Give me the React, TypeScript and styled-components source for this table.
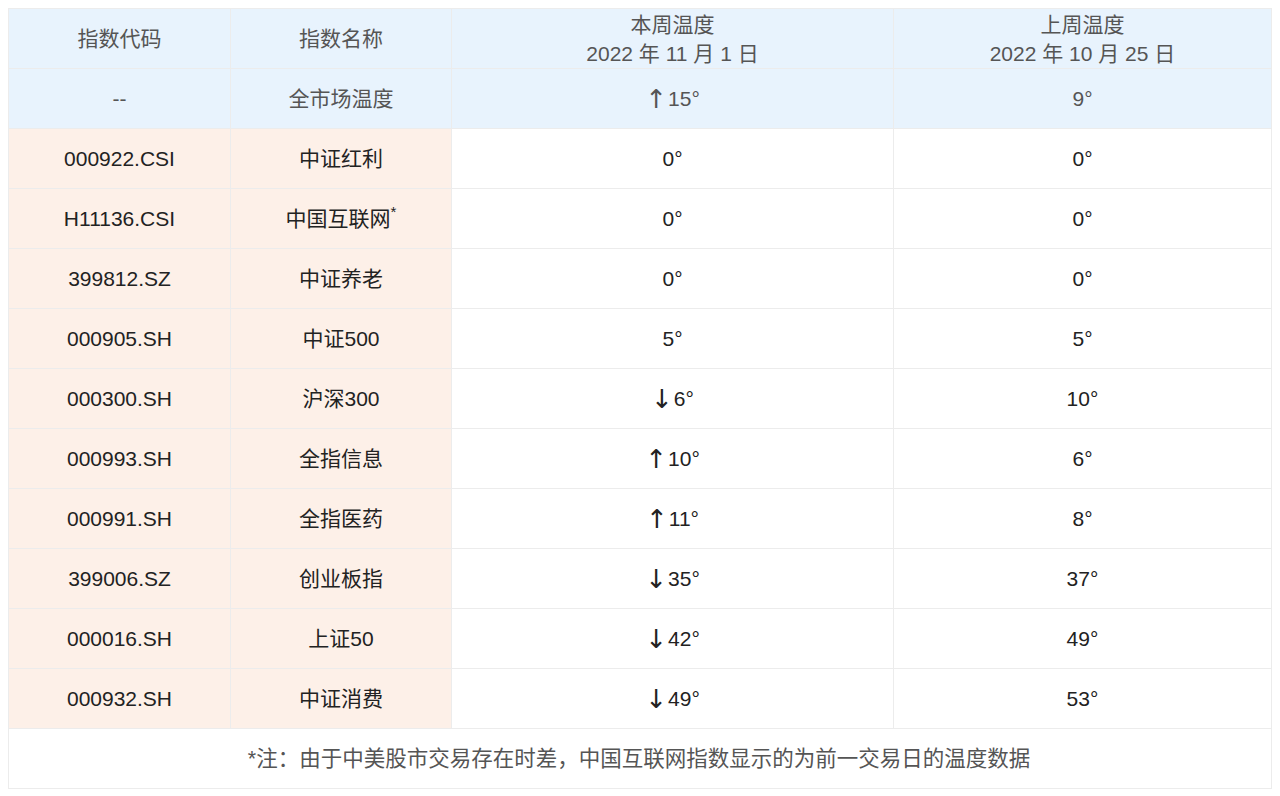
import React from 'react';
import styled, { createGlobalStyle } from 'styled-components';

const GlobalStyle = createGlobalStyle`
    body {
        margin: 8px;
        background: #fff;
        font-family: 'Liberation Sans', 'Noto Sans CJK SC', sans-serif;
    }
`;

const Table = styled.table`
    width: 1264px;
    border-collapse: collapse;
    table-layout: fixed;
    font-size: 21px;
    color: #222;
`;

const Cell = styled.td<{ tone?: 'head' | 'warm' | 'plain' }>`
    height: 59px;
    padding: 0;
    text-align: center;
    vertical-align: middle;
    border: 1px solid #ececec;
    line-height: 24px;
    background-color: ${({ tone }) =>
        tone === 'head' ? '#e8f3fd' : tone === 'warm' ? '#fdf0e8' : '#fff'};
    color: ${({ tone }) => (tone === 'head' ? '#555' : '#222')};
`;

const HeadCell = styled(Cell).attrs({ as: 'th' })`
    font-weight: 400;
    line-height: 29px;
`;

const Star = styled.sup`
    font-size: 15px;
    vertical-align: 9px;
    line-height: 0;
`;

const Arrow = styled.span`
    margin-right: 1px;
    font-family: 'DejaVu Sans', sans-serif;
    font-size: 26px;
    line-height: 0;
    position: relative;
    top: 2px;
`;

const Note = styled(Cell)`
    color: #555;
    font-size: 21.5px;
    padding-right: 2px;
`;

type rowType = {
    code: string;
    name: string;
    star?: boolean;
    now: number;
    trend?: 'up' | 'down';
    last: number;
};

const rows: rowType[] = [
    { code: '000922.CSI', name: '中证红利', now: 0, last: 0 },
    { code: 'H11136.CSI', name: '中国互联网', star: true, now: 0, last: 0 },
    { code: '399812.SZ', name: '中证养老', now: 0, last: 0 },
    { code: '000905.SH', name: '中证500', now: 5, last: 5 },
    { code: '000300.SH', name: '沪深300', now: 6, trend: 'down', last: 10 },
    { code: '000993.SH', name: '全指信息', now: 10, trend: 'up', last: 6 },
    { code: '000991.SH', name: '全指医药', now: 11, trend: 'up', last: 8 },
    { code: '399006.SZ', name: '创业板指', now: 35, trend: 'down', last: 37 },
    { code: '000016.SH', name: '上证50', now: 42, trend: 'down', last: 49 },
    { code: '000932.SH', name: '中证消费', now: 49, trend: 'down', last: 53 },
];

function Temp({ value, trend }: { value: number; trend?: 'up' | 'down' }) {
    return (
        <>
            {trend && <Arrow>{trend === 'up' ? '↑' : '↓'}</Arrow>}
            {value}°
        </>
    );
}

function App() {
    return (
        <>
            <GlobalStyle />
            <Table>
                <colgroup>
                    <col style={{ width: 222 }} />
                    <col style={{ width: 221 }} />
                    <col style={{ width: 442 }} />
                    <col />
                </colgroup>
                <thead>
                    <tr>
                        <HeadCell tone="head">指数代码</HeadCell>
                        <HeadCell tone="head">指数名称</HeadCell>
                        <HeadCell tone="head">
                            本周温度
                            <br />
                            2022 年 11 月 1 日
                        </HeadCell>
                        <HeadCell tone="head">
                            上周温度
                            <br />
                            2022 年 10 月 25 日
                        </HeadCell>
                    </tr>
                    <tr>
                        <HeadCell tone="head">--</HeadCell>
                        <HeadCell tone="head">全市场温度</HeadCell>
                        <HeadCell tone="head">
                            <Temp value={15} trend="up" />
                        </HeadCell>
                        <HeadCell tone="head">
                            <Temp value={9} />
                        </HeadCell>
                    </tr>
                </thead>
                <tbody>
                    {rows.map((row) => (
                        <tr key={row.code}>
                            <Cell tone="warm">{row.code}</Cell>
                            <Cell tone="warm">
                                {row.name}
                                {row.star && <Star>*</Star>}
                            </Cell>
                            <Cell>
                                <Temp value={row.now} trend={row.trend} />
                            </Cell>
                            <Cell>
                                <Temp value={row.last} />
                            </Cell>
                        </tr>
                    ))}
                    <tr>
                        <Note colSpan={4}>*注：由于中美股市交易存在时差，中国互联网指数显示的为前一交易日的温度数据</Note>
                    </tr>
                </tbody>
            </Table>
        </>
    );
}

export default App;
